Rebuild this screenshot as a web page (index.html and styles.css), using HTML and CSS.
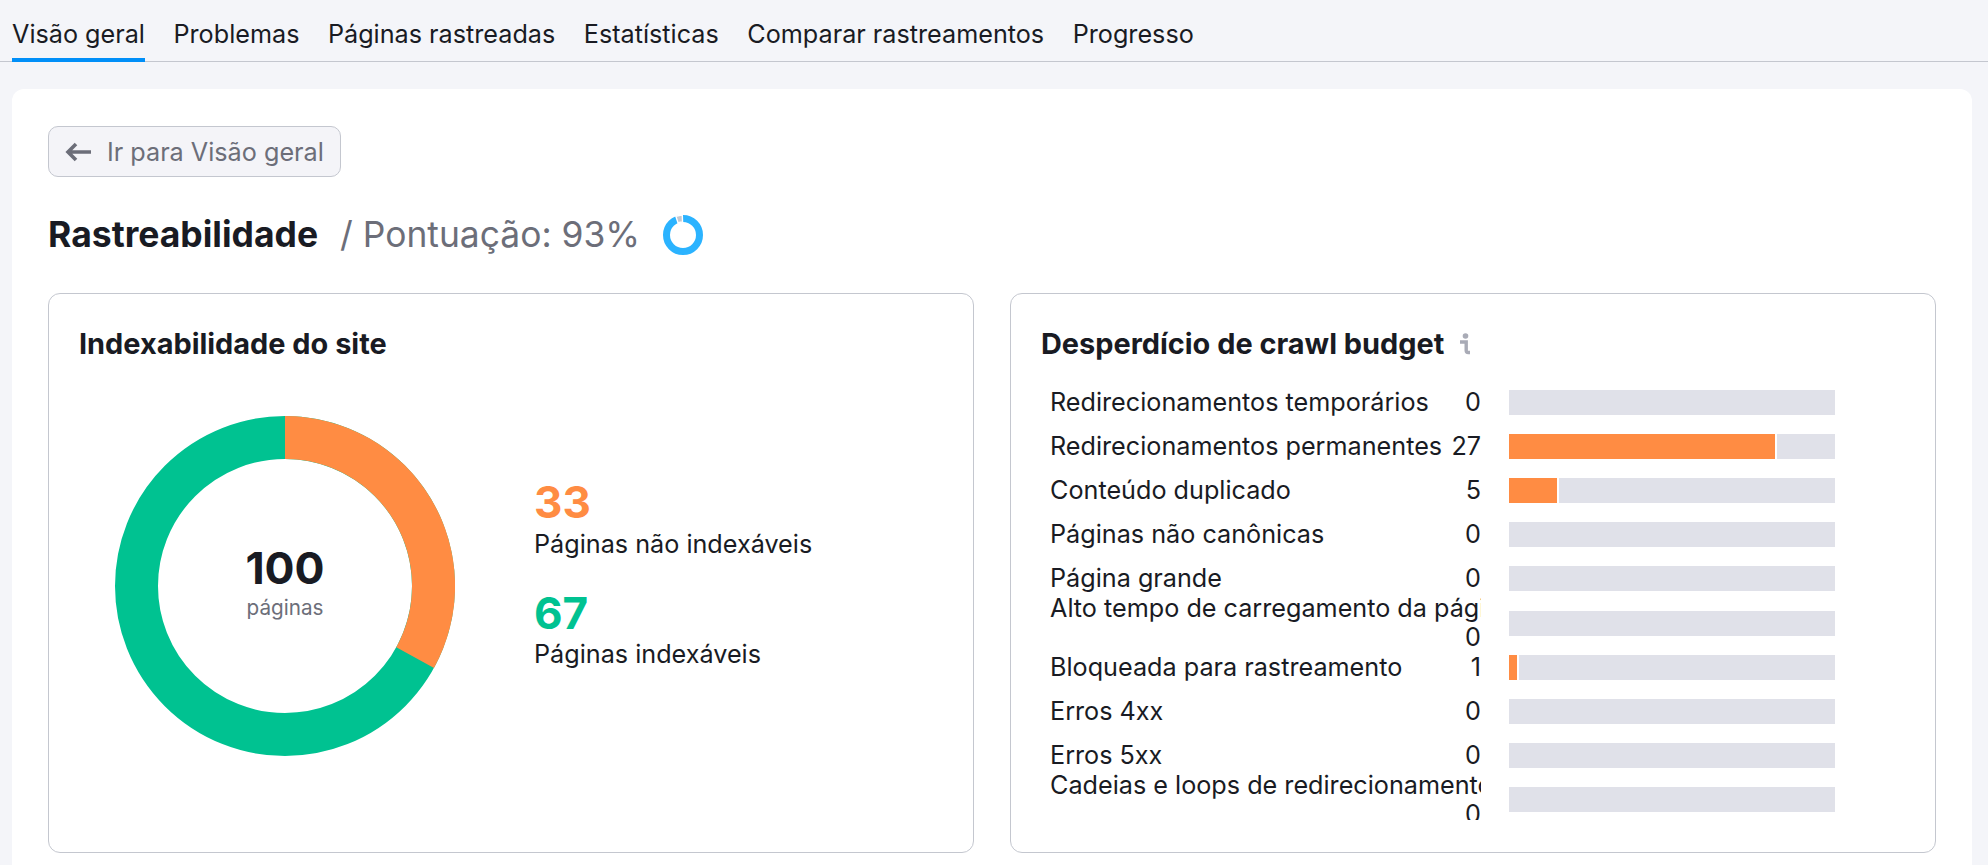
FILE: index.html
```html
<!DOCTYPE html>
<html lang="pt">
<head>
<meta charset="utf-8">
<title>Rastreabilidade</title>
<link rel="stylesheet" href="styles.css">
</head>
<body>
<nav class="tabs">
  <a class="tab active">Visão geral</a>
  <a class="tab">Problemas</a>
  <a class="tab">Páginas rastreadas</a>
  <a class="tab">Estatísticas</a>
  <a class="tab">Comparar rastreamentos</a>
  <a class="tab">Progresso</a>
</nav>
<main class="panel">
  <button class="back">
    <svg class="back-icon" viewBox="0 0 26 20" width="26" height="20"><path d="M11 2 3 10l8 8M3 10h23" fill="none" stroke="#6c6e79" stroke-width="3.6"/></svg>
    <span>Ir para Visão geral</span>
  </button>
  <div class="heading">
    <h1>Rastreabilidade</h1>
    <span class="score">/ Pontuação: 93%</span>
    <svg class="ring" viewBox="0 0 42 42" width="42" height="42">
      <circle cx="21" cy="21" r="16.5" fill="none" stroke="#2bb3ff" stroke-width="7"/>
      <path d="M13.9 2.4A20 20 0 0 1 20.3 1L20.55 8A13 13 0 0 0 16.1 8.95Z" fill="#c4c7cf" stroke="#fff" stroke-width="1.4"/>
    </svg>
  </div>
  <div class="cards">
    <section class="card">
      <h2>Indexabilidade do site</h2>
      <div class="index-body">
        <div class="donut">
          <svg viewBox="0 0 340 340" width="340" height="340">
            <circle cx="170" cy="170" r="148.5" fill="none" stroke="#00c291" stroke-width="43"/>
            <path d="M170 0A170 170 0 0 1 319 252 L281.3 231.2 A127 127 0 0 0 170 43Z" fill="#ff8c43"/>
          </svg>
          <div class="donut-center">
            <strong>100</strong>
            <span>páginas</span>
          </div>
        </div>
        <div class="legend">
          <div class="legend-item">
            <div class="num orange">33</div>
            <div class="legend-label">Páginas não indexáveis</div>
          </div>
          <div class="legend-item">
            <div class="num green">67</div>
            <div class="legend-label tight">Páginas indexáveis</div>
          </div>
        </div>
      </div>
    </section>
    <section class="card">
      <h2>Desperdício de crawl budget
        <svg class="info" viewBox="0 0 12 22" width="12" height="22"><circle cx="6.5" cy="3" r="2.8" fill="#a9abb6"/><path d="M1 9h6.2v8.5q0 2 2 2H11" fill="none" stroke="#a9abb6" stroke-width="3.4"/></svg>
      </h2>
      <div class="rows">
        <div class="row"><div class="cell"><span class="name">Redirecionamentos temporários</span><span class="val">0</span></div><div class="bar"></div></div>
        <div class="row"><div class="cell"><span class="name">Redirecionamentos permanentes</span><span class="val">27</span></div><div class="bar"><i style="width:82.3%"></i></div></div>
        <div class="row"><div class="cell"><span class="name">Conteúdo duplicado</span><span class="val">5</span></div><div class="bar"><i style="width:15.5%"></i></div></div>
        <div class="row"><div class="cell"><span class="name">Páginas não canônicas</span><span class="val">0</span></div><div class="bar"></div></div>
        <div class="row"><div class="cell"><span class="name">Página grande</span><span class="val">0</span></div><div class="bar"></div></div>
        <div class="row"><div class="cell"><span class="name">Alto tempo de carregamento da página</span><span class="val">0</span></div><div class="bar"></div></div>
        <div class="row"><div class="cell"><span class="name">Bloqueada para rastreamento</span><span class="val">1</span></div><div class="bar"><i style="width:3%"></i></div></div>
        <div class="row"><div class="cell"><span class="name">Erros 4xx</span><span class="val">0</span></div><div class="bar"></div></div>
        <div class="row"><div class="cell"><span class="name">Erros 5xx</span><span class="val">0</span></div><div class="bar"></div></div>
        <div class="row"><div class="cell"><span class="name">Cadeias e loops de redirecionamento</span><span class="val">0</span></div><div class="bar"></div></div>
      </div>
    </section>
  </div>
</main>
</body>
</html>
```
FILE: styles.css
```css
* { box-sizing: border-box; }
html, body { margin: 0; height: 865px; overflow: hidden; }
body { background: #f4f5f9; font-family: Inter, "Liberation Sans", sans-serif; color: #191b23; font-size: 25.2px; }
.tabs { display: flex; gap: 28.5px; height: 62px; padding-left: 12px; border-bottom: 1px solid #c4c7cf; }
.tab { height: 62px; line-height: 68px; display: block; }
.tab.active { border-bottom: 4px solid #008ff8; height: 62px; }
.panel { margin: 27px 16px 0 12px; height: 800px; background: #fff; border-radius: 12px; padding: 37px 36px 0; }
.back { display: flex; align-items: center; gap: 16px; height: 51px; width: 293px; padding: 0 0 0 16px; font: 400 25.2px Inter, sans-serif; color: #6c6e79; background: #f4f4f8; border: 1px solid #c4c7cf; border-radius: 10px; }
.heading { display: flex; align-items: center; margin-top: 36px; height: 44px; }
h1 { margin: 0; font-size: 35.5px; font-weight: 700; line-height: 44px; }
.score { margin-left: 22px; font-size: 35.4px; color: #6c6e79; line-height: 44px; }
.ring { margin-left: 22px; }
.cards { display: flex; gap: 36px; margin-top: 36px; }
.card { width: 926px; height: 560px; border: 1px solid #c4c7cf; border-radius: 12px; padding: 32px 30px 0; }
.card + .card { width: 926px; }
h2 { margin: 0; font-size: 28.9px; font-weight: 700; line-height: 36px; display: flex; align-items: center; gap: 15px; }
.index-body { display: flex; align-items: flex-start; margin-top: 54px; padding-left: 36px; }
.donut { position: relative; width: 340px; height: 340px; }
.donut svg { display: block; }
.donut-center { position: absolute; inset: 0 0 10px; display: flex; flex-direction: column; align-items: center; justify-content: center; }
.donut-center strong { font-size: 44.5px; font-weight: 700; line-height: 54px; }
.donut-center span { font-size: 20.7px; color: #6c6e79; line-height: 26px; }
.legend { margin-left: 79px; padding-top: 63px; display: flex; flex-direction: column; gap: 29px; }
.num { font-size: 44px; font-weight: 700; line-height: 46px; }
.orange { color: #ff8c43; }
.green { color: #00c291; }
.legend-label { line-height: 34px; margin-top: 2px; }
.legend-label.tight { margin-top: 1px; }
.rows { margin-top: 18px; height: 440px; overflow: hidden; }
.row { height: 44.2px; display: flex; align-items: center; gap: 28px; padding-left: 9px; }
.cell { width: 431px; display: flex; flex-wrap: wrap; justify-content: space-between; line-height: 29px; flex: none; }
.name { white-space: nowrap; overflow: hidden; max-width: 100%; }
.val { margin-left: auto; }
.bar { width: 325.5px; height: 25px; background: #e0e1e9; flex: none; display: flex; }
.bar i { display: block; background: #ff8c43; border-right: 2px solid #fff; }
```
